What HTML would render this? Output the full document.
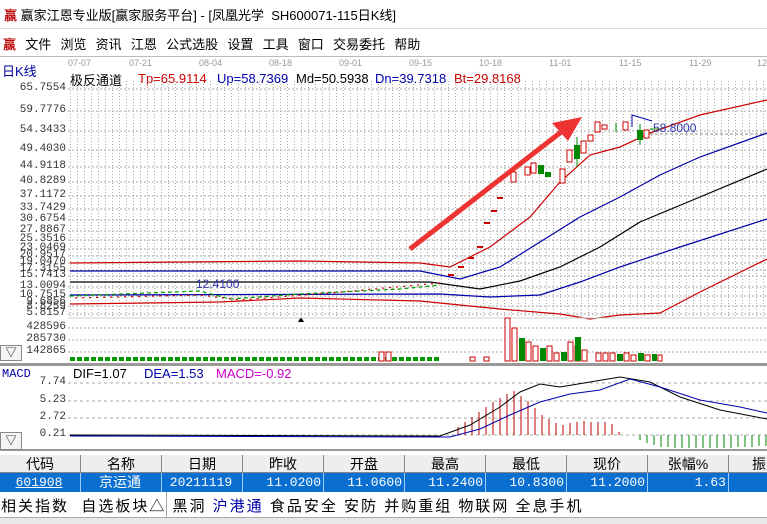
<!DOCTYPE html>
<html><head><meta charset="utf-8"><style>
*{margin:0;padding:0;box-sizing:border-box}
body{width:767px;height:524px;overflow:hidden;background:#fff;font-family:"Liberation Sans","Noto Sans CJK SC",sans-serif;position:relative}
.a{position:absolute;white-space:nowrap}
.t{font-size:14px;color:#000}
.m{font-size:13px}
.ax{font-family:"Liberation Mono","Noto Sans CJK SC",monospace;font-size:11px;color:#333;right:701px;text-align:right}
.th{position:absolute;top:455px;height:18px;background:#eee;border-right:1px solid #888;border-bottom:1px solid #888;font-size:14px;text-align:center;line-height:18px}
.td{position:absolute;top:473px;height:19px;background:#0a6fd0;color:#fff;border-right:1px solid #9cf;font-family:"Liberation Mono","Noto Sans CJK SC",monospace;font-size:13px;line-height:19px;text-align:right;padding-right:2px}
</style></head><body>
<div class="a t" style="left:4px;top:5px;font-size:13px"><span style="color:#b00;font-weight:bold">赢</span> 赢家江恩专业版[赢家服务平台] - [凤凰光学&nbsp; SH600071-115日K线]</div>
<div class="a" style="left:0;top:28px;width:767px;height:1px;background:#ddd"></div>
<div class="a t" style="left:3px;top:34px;font-size:13px;word-spacing:1px"><span style="color:#b00;font-weight:bold">赢</span>&nbsp; 文件 &nbsp;浏览 &nbsp;资讯 &nbsp;江恩 &nbsp;公式选股 &nbsp;设置 &nbsp;工具 &nbsp;窗口 &nbsp;交易委托 &nbsp;帮助</div>
<div class="a" style="left:0;top:56px;width:767px;height:1px;background:#bbb"></div>
<div class="a" style="left:2px;top:61px;font-size:13px;color:#0000a0">日K线</div>
<div class="a" style="left:70px;top:70px;font-size:13px">极反通道</div>
<div class="a m" style="left:138px;top:71px;color:#c00">Tp=65.9114</div>
<div class="a m" style="left:217px;top:71px;color:#00a">Up=58.7369</div>
<div class="a m" style="left:296px;top:71px">Md=50.5938</div>
<div class="a m" style="left:375px;top:71px;color:#00a">Dn=39.7318</div>
<div class="a m" style="left:454px;top:71px;color:#c00">Bt=29.8168</div>
<svg class="a" style="left:0;top:57px" width="767" height="400">
<defs>
<pattern id="vg" width="7" height="3" patternUnits="userSpaceOnUse"><rect x="0" y="0" width="1" height="1" fill="#aaa"/></pattern>
<pattern id="vb" width="7" height="6" patternUnits="userSpaceOnUse"><rect x="0" y="0" width="5" height="4" fill="#090"/></pattern>
</defs>
<g font-family="Liberation Sans" font-size="9" fill="#999">
<text x="68" y="9">07-07</text><text x="129" y="9">07-21</text><text x="199" y="9">08-04</text><text x="269" y="9">08-18</text><text x="339" y="9">09-01</text><text x="409" y="9">09-15</text><text x="479" y="9">10-18</text><text x="549" y="9">11-01</text><text x="619" y="9">11-15</text><text x="689" y="9">11-29</text><text x="757" y="9">12</text>
</g>
<rect x="68" y="24" width="699" height="237" fill="url(#vg)"/>
<g stroke="#aaa" stroke-dasharray="2,2" stroke-width="1">
<line x1="68" y1="32" x2="767" y2="32"/><line x1="68" y1="54" x2="767" y2="54"/><line x1="68" y1="74" x2="767" y2="74"/><line x1="68" y1="93" x2="767" y2="93"/><line x1="68" y1="110" x2="767" y2="110"/><line x1="68" y1="125" x2="767" y2="125"/><line x1="68" y1="139" x2="767" y2="139"/><line x1="68" y1="152" x2="767" y2="152"/><line x1="68" y1="163" x2="767" y2="163"/><line x1="68" y1="174" x2="767" y2="174"/><line x1="68" y1="183" x2="767" y2="183"/><line x1="68" y1="192" x2="767" y2="192"/><line x1="68" y1="199" x2="767" y2="199"/><line x1="68" y1="206" x2="767" y2="206"/><line x1="68" y1="213" x2="767" y2="213"/><line x1="68" y1="219" x2="767" y2="219"/><line x1="68" y1="230" x2="767" y2="230"/><line x1="68" y1="239" x2="767" y2="239"/><line x1="68" y1="249" x2="767" y2="249"/><line x1="68" y1="257" x2="767" y2="257"/>
<line x1="68" y1="271" x2="767" y2="271"/><line x1="68" y1="283" x2="767" y2="283"/><line x1="68" y1="295" x2="767" y2="295"/>
</g>
<line x1="640" y1="77" x2="767" y2="77" stroke="#888" stroke-dasharray="3,2"/>
<g fill="none" stroke-width="1.2">
<polyline stroke="#c00" points="70,206 300,204 420,206 450,210 490,190 530,160 560,125 590,98 620,90 650,76 700,58 767,43"/>
<polyline stroke="#00a" points="70,214 420,214 460,222 500,210 540,185 580,160 620,140 660,118 700,100 767,76"/>
<polyline stroke="#000" points="70,225 430,225 480,232 520,224 560,210 600,190 640,165 700,140 767,112"/>
<polyline stroke="#00a" points="70,238 440,237 490,240 540,238 580,225 620,210 680,190 767,162"/>
<polyline stroke="#c00" points="70,247 220,245 300,241 420,244 500,252 560,257 590,262 620,258 660,256 700,235 767,202"/>
<polyline stroke="#090" stroke-dasharray="4,3" points="70,239 200,234 230,242 300,237 400,232 440,228"/>
<polyline stroke="#c00" stroke-dasharray="2,5" points="75,241 200,238 240,243 330,236 440,226"/>
</g>
<g stroke="#c00" stroke-width="2"><line x1="448" y1="218" x2="454" y2="218"/><line x1="458" y1="210" x2="464" y2="210"/><line x1="468" y1="201" x2="474" y2="201"/><line x1="477" y1="190" x2="483" y2="190"/><line x1="484" y1="166" x2="490" y2="166"/><line x1="491" y1="154" x2="497" y2="154"/><line x1="497" y1="141" x2="503" y2="141"/></g>
<g stroke="#c00" fill="#fff">
<rect x="511" y="115" width="5" height="10"/><rect x="525" y="110" width="5" height="8"/><rect x="531" y="106" width="5" height="10"/><rect x="560" y="112" width="5" height="14"/><rect x="567" y="93" width="5" height="12"/><rect x="581" y="84" width="5" height="12"/><rect x="588" y="78" width="5" height="6"/><rect x="595" y="65" width="5" height="10"/><rect x="602" y="68" width="5" height="4"/><rect x="623" y="65" width="5" height="8"/><rect x="644" y="73" width="5" height="8"/>
</g>
<g fill="#080"><rect x="538" y="108" width="6" height="9"/><rect x="545" y="115" width="6" height="5"/><rect x="574" y="88" width="6" height="14"/><rect x="637" y="73" width="6" height="10"/></g>
<g stroke="#080"><line x1="577" y1="80" x2="577" y2="110"/><line x1="640" y1="67" x2="640" y2="88"/><line x1="616" y1="66" x2="616" y2="75"/><line x1="650" y1="72" x2="660" y2="72"/></g>
<polyline points="632,70 632,58 652,64" fill="none" stroke="#00a"/>
<text x="653" y="75" font-size="12" fill="#33a">58.8000</text>
<text x="196" y="231" font-size="12" fill="#33a">12.4100</text>
<polygon points="298,265 304,265 301,260" fill="#000"/>
<line x1="410" y1="192" x2="565" y2="72" stroke="#e33" stroke-width="5"/>
<polygon points="582,60 552,66 568,84" fill="#e33"/>
<line x1="68" y1="261" x2="767" y2="261" stroke="#ccc"/>
<rect x="68" y="298" width="372" height="6" fill="url(#vb)"/>
<g stroke="#c00" fill="#fff">
<rect x="505" y="261" width="5" height="43"/><rect x="512" y="271" width="5" height="33"/><rect x="526" y="285" width="5" height="19"/><rect x="533" y="289" width="5" height="15"/><rect x="547" y="289" width="5" height="15"/><rect x="554" y="296" width="5" height="8"/><rect x="568" y="285" width="5" height="19"/><rect x="575" y="289" width="5" height="15"/><rect x="582" y="293" width="5" height="11"/><rect x="596" y="296" width="5" height="8"/><rect x="603" y="296" width="5" height="8"/><rect x="610" y="296" width="5" height="8"/><rect x="624" y="296" width="5" height="8"/><rect x="631" y="298" width="5" height="6"/><rect x="645" y="298" width="5" height="6"/><rect x="658" y="298" width="4" height="6"/><rect x="379" y="295" width="5" height="9"/><rect x="386" y="295" width="5" height="9"/><rect x="470" y="300" width="5" height="4"/><rect x="484" y="300" width="5" height="4"/>
</g>
<g fill="#080"><rect x="519" y="281" width="6" height="23"/><rect x="540" y="291" width="6" height="13"/><rect x="561" y="295" width="6" height="9"/><rect x="575" y="280" width="6" height="24"/><rect x="617" y="297" width="6" height="7"/><rect x="638" y="296" width="6" height="8"/><rect x="652" y="297" width="5" height="7"/></g>
<rect x="0" y="306" width="767" height="3" fill="#999"/>
<g stroke="#aaa" stroke-dasharray="3,3"><line x1="68" y1="326" x2="767" y2="326"/><line x1="68" y1="344" x2="767" y2="344"/><line x1="68" y1="361" x2="767" y2="361"/><line x1="68" y1="378" x2="767" y2="378"/></g>
<g stroke="#b00"><line x1="458" y1="378" x2="458" y2="370"/><line x1="465" y1="378" x2="465" y2="365"/><line x1="472" y1="378" x2="472" y2="360"/><line x1="479" y1="378" x2="479" y2="355"/><line x1="486" y1="378" x2="486" y2="350"/><line x1="493" y1="378" x2="493" y2="345"/><line x1="500" y1="378" x2="500" y2="341"/><line x1="507" y1="378" x2="507" y2="337"/><line x1="514" y1="378" x2="514" y2="334"/><line x1="521" y1="378" x2="521" y2="339"/><line x1="528" y1="378" x2="528" y2="344"/><line x1="535" y1="378" x2="535" y2="351"/><line x1="542" y1="378" x2="542" y2="358"/><line x1="549" y1="378" x2="549" y2="362"/><line x1="556" y1="378" x2="556" y2="366"/><line x1="563" y1="378" x2="563" y2="368"/><line x1="570" y1="378" x2="570" y2="366"/><line x1="577" y1="378" x2="577" y2="365"/><line x1="584" y1="378" x2="584" y2="364"/><line x1="591" y1="378" x2="591" y2="365"/><line x1="598" y1="378" x2="598" y2="365"/><line x1="605" y1="378" x2="605" y2="365"/><line x1="612" y1="378" x2="612" y2="367"/><line x1="619" y1="378" x2="619" y2="375"/></g>
<g stroke="#080"><line x1="640" y1="378" x2="640" y2="383"/><line x1="647" y1="378" x2="647" y2="386"/><line x1="654" y1="378" x2="654" y2="388"/><line x1="661" y1="378" x2="661" y2="390"/><line x1="668" y1="378" x2="668" y2="390"/><line x1="675" y1="378" x2="675" y2="391"/><line x1="682" y1="378" x2="682" y2="391"/><line x1="689" y1="378" x2="689" y2="391"/><line x1="696" y1="378" x2="696" y2="391"/><line x1="703" y1="378" x2="703" y2="391"/><line x1="710" y1="378" x2="710" y2="391"/><line x1="717" y1="378" x2="717" y2="391"/><line x1="724" y1="378" x2="724" y2="391"/><line x1="731" y1="378" x2="731" y2="391"/><line x1="738" y1="378" x2="738" y2="390"/><line x1="745" y1="378" x2="745" y2="390"/><line x1="752" y1="378" x2="752" y2="390"/><line x1="759" y1="378" x2="759" y2="389"/><line x1="766" y1="378" x2="766" y2="389"/></g>
<polyline fill="none" stroke="#000" points="70,378 440,379 470,368 500,350 520,335 540,327 560,330 590,325 620,320 650,325 680,340 720,353 767,362"/>
<polyline fill="none" stroke="#00a" points="70,379 450,380 480,372 510,358 540,345 570,337 600,333 630,322 660,330 700,343 740,350 767,356"/>
<rect x="0" y="392" width="767" height="2" fill="#999"/>
</g>
<div class="a ax" style="top:82px">65.7554</div><div class="a ax" style="top:104px">59.7776</div><div class="a ax" style="top:124px">54.3433</div><div class="a ax" style="top:143px">49.4030</div><div class="a ax" style="top:160px">44.9118</div><div class="a ax" style="top:175px">40.8289</div><div class="a ax" style="top:189px">37.1172</div><div class="a ax" style="top:202px">33.7429</div><div class="a ax" style="top:213px">30.6754</div><div class="a ax" style="top:224px">27.8867</div><div class="a ax" style="top:233px">25.3516</div><div class="a ax" style="top:242px">23.0469</div><div class="a ax" style="top:249px">20.9517</div><div class="a ax" style="top:256px">19.0470</div><div class="a ax" style="top:263px">17.3155</div><div class="a ax" style="top:269px">15.7413</div><div class="a ax" style="top:280px">13.0094</div><div class="a ax" style="top:289px">10.7515</div><div class="a ax" style="top:296px">9.6856</div><div class="a ax" style="top:301px">8.8259</div><div class="a ax" style="top:307px">5.8157</div>
<div class="a ax" style="top:321px">428596</div><div class="a ax" style="top:333px">285730</div><div class="a ax" style="top:345px">142865</div>
<div class="a" style="left:0;top:345px;width:22px;height:16px;border:1px solid #888;background:#f4f4f4;font-size:11px;text-align:center;line-height:14px">▽</div>
<div class="a" style="left:2px;top:367px;font-size:12px;color:#0000a0;font-family:'Liberation Mono',monospace">MACD</div>
<div class="a m" style="left:73px;top:366px">DIF=1.07</div>
<div class="a m" style="left:144px;top:366px;color:#00a">DEA=1.53</div>
<div class="a m" style="left:216px;top:366px;color:#c0c">MACD=-0.92</div>
<div class="a ax" style="top:376px">7.74</div><div class="a ax" style="top:394px">5.23</div><div class="a ax" style="top:411px">2.72</div><div class="a ax" style="top:428px">0.21</div>
<div class="a" style="left:0;top:432px;width:22px;height:18px;border:1px solid #888;background:#f4f4f4;font-size:11px;text-align:center;line-height:16px">▽</div>
<div class="th" style="left:0;width:81px">代码</div><div class="th" style="left:81px;width:81px">名称</div><div class="th" style="left:162px;width:81px">日期</div><div class="th" style="left:243px;width:81px">昨收</div><div class="th" style="left:324px;width:81px">开盘</div><div class="th" style="left:405px;width:81px">最高</div><div class="th" style="left:486px;width:81px">最低</div><div class="th" style="left:567px;width:81px">现价</div><div class="th" style="left:648px;width:81px">张幅%</div><div class="th" style="left:729px;width:40px;text-align:right;padding-right:2px">振</div>
<div class="td" style="left:0;width:81px;text-align:center;text-decoration:underline">601908</div><div class="td" style="left:81px;width:81px;text-align:center;font-family:'Liberation Sans','Noto Sans CJK SC',sans-serif;font-size:14px">京运通</div><div class="td" style="left:162px;width:81px;text-align:center">20211119</div><div class="td" style="left:243px;width:81px">11.0200</div><div class="td" style="left:324px;width:81px">11.0600</div><div class="td" style="left:405px;width:81px">11.2400</div><div class="td" style="left:486px;width:81px">10.8300</div><div class="td" style="left:567px;width:81px">11.2000</div><div class="td" style="left:648px;width:81px">1.63</div><div class="td" style="left:729px;width:40px"></div>
<div class="a" style="left:0;top:492px;width:767px;height:26px;background:#fff;border-bottom:1px solid #aaa"></div>
<div class="a" style="left:166px;top:492px;width:1px;height:26px;background:#aaa"></div>
<div class="a" style="left:1px;top:495px;font-size:15px;letter-spacing:2px">相关指数 &nbsp;自选板块△ 黑洞 <span style="color:#00a">沪港通</span> 食品安全 安防 并购重组 物联网 全息手机</div>
<div class="a" style="left:0;top:518px;width:767px;height:6px;background:#e8e8e8"></div>
</body></html>
